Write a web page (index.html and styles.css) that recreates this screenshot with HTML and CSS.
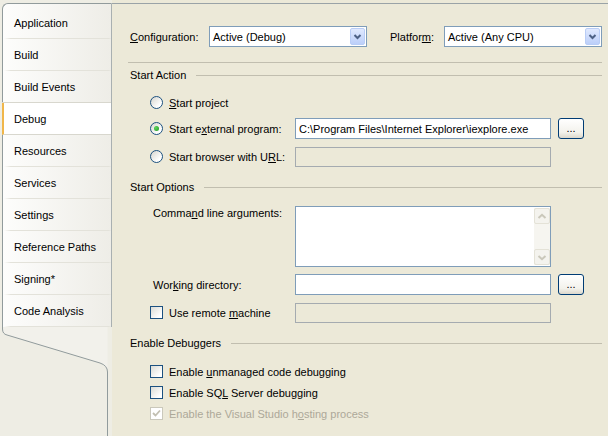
FILE: index.html
```html
<!DOCTYPE html>
<html>
<head>
<meta charset="utf-8">
<link rel="stylesheet" href="styles.css">
</head>
<body>
<div class="window">
  <nav class="side">
    <ul class="tabs">
      <li class="tab">Application</li>
      <li class="tab">Build</li>
      <li class="tab">Build Events</li>
      <li class="tab active">Debug</li>
      <li class="tab">Resources</li>
      <li class="tab">Services</li>
      <li class="tab">Settings</li>
      <li class="tab">Reference Paths</li>
      <li class="tab">Signing*</li>
      <li class="tab">Code Analysis</li>
    </ul>
    <svg class="tail" viewBox="0 0 112 109" preserveAspectRatio="xMinYMin slice">
      <path d="M2.5 0 V2 Q2.5 7 7 8 L100 36 Q107.5 38.5 107.5 45 V0 Z" fill="#f2f1eb"/>
      <path d="M2.5 0 V2 Q2.5 7 7 8 L100 36 Q107.5 38.5 107.5 45 V109" fill="none" stroke="#919b9c" stroke-width="1"/>
    </svg>
  </nav>

  <main class="page">
    <div class="config-row">
      <span class="lbl cfg-lbl"><u>C</u>onfiguration:</span>
      <div class="combo">
        <span class="combo-text">Active (Debug)</span>
        <span class="combo-btn"><svg width="13" height="15" viewBox="0 0 13 15"><polyline points="3.5,6 6.5,9 9.5,6" fill="none" stroke="#4d6185" stroke-width="2"/></svg></span>
      </div>
      <span class="lbl plat-lbl">Platfor<u>m</u>:</span>
      <div class="combo">
        <span class="combo-text">Active (Any CPU)</span>
        <span class="combo-btn"><svg width="13" height="15" viewBox="0 0 13 15"><polyline points="3.5,6 6.5,9 9.5,6" fill="none" stroke="#4d6185" stroke-width="2"/></svg></span>
      </div>
    </div>

    <div class="rule"></div>

    <div class="group-head head-action">Start Action</div>
    <div class="opts">
      <div class="row r1">
        <div class="lead"><span class="radio"></span><span><u>S</u>tart project</span></div>
      </div>
      <div class="row r2">
        <div class="lead"><span class="radio on"></span><span>Start e<u>x</u>ternal program:</span></div>
        <div class="field">C:\Program Files\Internet Explorer\iexplore.exe</div>
        <div class="btn">...</div>
      </div>
      <div class="row r3">
        <div class="lead"><span class="radio"></span><span>Start browser with U<u>R</u>L:</span></div>
        <div class="field disabled"></div>
      </div>
    </div>

    <div class="group-head head-options">Start Options</div>
    <div class="opts">
      <div class="row cmd">
        <div class="lead text"><span>Comma<u>n</u>d line arguments:</span></div>
        <div class="area">
          <div class="scroll">
            <span class="sbtn"><svg width="10" height="7" viewBox="0 0 10 7"><polyline points="1.5,5 5,1.8 8.5,5" fill="none" stroke="#cac8bb" stroke-width="2"/></svg></span>
            <span class="sbtn"><svg width="10" height="7" viewBox="0 0 10 7"><polyline points="1.5,2 5,5.2 8.5,2" fill="none" stroke="#cac8bb" stroke-width="2"/></svg></span>
          </div>
        </div>
      </div>
      <div class="row wd">
        <div class="lead text"><span>Wor<u>k</u>ing directory:</span></div>
        <div class="field"></div>
        <div class="btn">...</div>
      </div>
      <div class="row remote">
        <div class="lead"><span class="check"></span><span>Use remote <u>m</u>achine</span></div>
        <div class="field disabled"></div>
      </div>
    </div>

    <div class="group-head head-debug">Enable Debuggers</div>
    <div class="opts">
      <div class="row c1">
        <div class="lead wide"><span class="check"></span><span>Enable <u>u</u>nmanaged code debugging</span></div>
      </div>
      <div class="row">
        <div class="lead wide"><span class="check"></span><span>Enable SQ<u>L</u> Server debugging</span></div>
      </div>
      <div class="row">
        <div class="lead wide dis"><span class="check dis"><svg width="11" height="11" viewBox="0 0 11 11"><polyline points="2,5 4.5,7.5 9,2.5" fill="none" stroke="#c2bfb1" stroke-width="1.8"/></svg></span><span>Enable the Visual Studio h<u>o</u>sting process</span></div>
      </div>
    </div>
  </main>
</div>
</body>
</html>
```

FILE: styles.css
```css
* { box-sizing: border-box; }
html, body { margin: 0; height: 100%; }
body {
  background: #ece9d8;
  font-family: "Liberation Sans", Arial, sans-serif;
  font-size: 11px;
  color: #000;
  overflow: hidden;
}
u { text-decoration: underline; text-underline-offset: 1px; }

.window { display: flex; height: 436px; }

/* ---------- left tab strip ---------- */
.side {
  width: 112px;
  flex: none;
  display: flex;
  flex-direction: column;
  background: #eeede4;
}
.tabs {
  list-style: none;
  margin: 3px 0 0 2px;
  padding: 3px 0 0;
  border-top: 1px solid #919b9c;
  border-left: 1px solid #919b9c;
  border-right: 1px solid #a9b0b1;
  border-top-left-radius: 6px;
  background: linear-gradient(to right, #fdfdfc, #eeede7);
}
.tab {
  height: 32px;
  display: flex;
  align-items: center;
  padding-left: 11px;
  border-bottom: 1px solid transparent;
  border-image: linear-gradient(to right, rgba(228,227,219,0) 2%, #e3e2da 8%, #e3e2da 97%, rgba(228,227,219,0)) 1;
  white-space: nowrap;
}
.tab.active {
  background: #fff;
  margin-left: -1px;
  padding-left: 10px;
  border-image: none;
  border-left: 2px solid #f0b64a;
  border-bottom: 1px solid #d8d7ce;
  box-shadow: 0 -1px 0 #d8d7ce;
}
.tail { flex: 1; display: block; width: 112px; }

/* ---------- page ---------- */
.page {
  flex: 1;
  margin-top: 3px;
  border-top: 1px solid #9aa3a7;
  padding: 22px 21px 0 18px;
}
.config-row { display: flex; align-items: center; height: 21px; }
.cfg-lbl { width: 79px; }
.plat-lbl { width: 54px; margin-left: 23px; }
.combo {
  width: 158px;
  height: 21px;
  border: 1px solid #7f9db9;
  background: #fff;
  display: flex;
  align-items: center;
}
.combo-text { flex: 1; padding-left: 3px; white-space: nowrap; }
.combo-btn {
  width: 15px;
  height: 17px;
  margin-right: 1px;
  border: 1px solid #b9cdf6;
  border-radius: 2px;
  background: linear-gradient(#e0e9fe, #bccff9);
  display: flex;
  align-items: center;
  justify-content: center;
}

.rule { height: 1px; background: #c1beaf; margin: 15px 0 0 -2px; }

.group-head {
  display: flex;
  align-items: center;
  gap: 10px;
  height: 13px;
  line-height: 13px;
  white-space: nowrap;
}
.group-head::after { content: ""; flex: 1; height: 1px; background: #c1beaf; }
.head-action { margin-top: 6px; }
.head-options { margin-top: 14px; }
.head-debug { margin-top: 14px; }

.opts { padding-left: 20px; }
.row { display: flex; align-items: center; height: 21px; }
.r1 { margin-top: 10px; }
.r2 { margin-top: 5px; }
.r3 { margin-top: 7px; }
.cmd { margin-top: 12px; height: 61px; align-items: flex-start; }
.cmd .lead { line-height: 14px; }
.wd { margin-top: 7px; }
.remote { margin-top: 7px; }
.c1 { margin-top: 11px; }

.lead {
  width: 145px;
  flex: none;
  display: flex;
  align-items: center;
  gap: 6px;
  white-space: nowrap;
}
.lead.text { padding-left: 3px; }
.lead.wide { width: auto; }
.lead.dis { color: #aca899; }

.field {
  width: 256px;
  height: 21px;
  border: 1px solid #7f9db9;
  background: #fff;
  padding-left: 3px;
  display: flex;
  align-items: center;
  white-space: nowrap;
  overflow: hidden;
}
.field.disabled { background: #ece9d8; border-color: #a5abb0; height: 20px; }

.btn {
  width: 26px;
  height: 21px;
  margin-left: 7px;
  border: 1px solid #003c74;
  border-radius: 3px;
  background: linear-gradient(#ffffff, #f3f2ec 70%, #dcd8cc);
  display: flex;
  align-items: center;
  justify-content: center;
  line-height: 13px;
}

.area {
  width: 256px;
  height: 61px;
  border: 1px solid #7f9db9;
  background: #fff;
  display: flex;
  justify-content: flex-end;
  padding: 1px 0;
}
.scroll {
  width: 16px;
  display: flex;
  flex-direction: column;
  justify-content: space-between;
  background: #f6f5f0;
}
.sbtn {
  width: 16px;
  height: 16px;
  border: 1px solid #e4e2d7;
  border-radius: 2px;
  background: #f4f3ee;
  display: flex;
  align-items: center;
  justify-content: center;
}

.radio {
  width: 13px;
  height: 13px;
  flex: none;
  border: 1px solid #1c5180;
  border-radius: 50%;
  background: linear-gradient(135deg, #d6d5ce, #ffffff 75%);
  display: flex;
  align-items: center;
  justify-content: center;
}
.radio.on::after {
  content: "";
  width: 5px;
  height: 5px;
  border-radius: 50%;
  background: radial-gradient(circle at 35% 35%, #5fd35f, #1e9a1e);
}
.check {
  width: 13px;
  height: 13px;
  flex: none;
  border: 1px solid #1c5180;
  background: linear-gradient(135deg, #dcdcd5, #ffffff 80%);
  display: flex;
  align-items: center;
  justify-content: center;
}
.check.dis { border-color: #cac8bb; background: #fff; }
```
